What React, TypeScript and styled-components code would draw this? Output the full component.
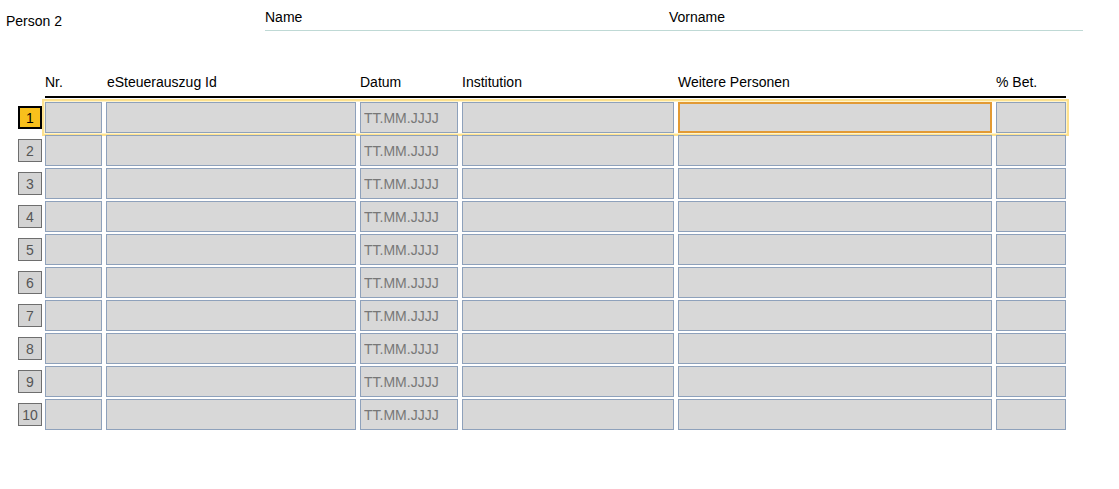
import styled, { createGlobalStyle } from "styled-components";

const GlobalStyle = createGlobalStyle`
  body {
    margin: 0;
    background: #ffffff;
    font-family: "Liberation Sans", Arial, sans-serif;
    color: #000000;
  }
`;

const COLUMNS = "57px 250px 98px 212px 314px 70px";

const Page = styled.div`
  width: 1119px;
  height: 489px;
  display: flex;
  flex-direction: column;
`;

const TopBar = styled.div`
  display: flex;
  align-items: flex-start;
  padding-top: 9px;
`;

const PersonLabel = styled.div`
  width: 259px;
  padding-left: 6px;
  margin-top: 4px;
  font-size: 14px;
  line-height: 16px;
`;

const NameBlock = styled.div`
  width: 818px;
  display: grid;
  grid-template-columns: 404px 1fr;
  padding-bottom: 5px;
  border-bottom: 1px solid #bfd9d5;
  font-size: 14px;
  line-height: 16px;
`;

const Table = styled.div`
  margin-top: 43px;
  padding-left: 18px;
  display: flex;
  flex-direction: column;
  gap: 2px;
`;

const HeaderRow = styled.div`
  display: flex;
  gap: 3px;
  margin-bottom: 2px;
`;

const Spacer = styled.div`
  width: 24px;
  flex: none;
`;

const HeaderFields = styled.div`
  display: grid;
  grid-template-columns: ${COLUMNS};
  column-gap: 4px;
  padding-bottom: 6px;
  border-bottom: 2px solid #000000;
  font-size: 14px;
  line-height: 16px;
`;

const HeaderCell = styled.div<{ $indent?: number }>`
  padding-left: ${(p) => p.$indent ?? 0}px;
  white-space: nowrap;
`;

const Row = styled.div`
  display: flex;
  align-items: center;
  gap: 3px;
`;

const NumBox = styled.div<{ $active?: boolean }>`
  width: 24px;
  height: 23px;
  flex: none;
  box-sizing: border-box;
  display: flex;
  align-items: center;
  justify-content: center;
  font-size: 14px;
  background: ${(p) => (p.$active ? "#f8c01c" : "#d3d3d3")};
  border: ${(p) => (p.$active ? "2px solid #000000" : "1px solid #6e6e6e")};
  color: ${(p) => (p.$active ? "#000000" : "#555555")};
`;

const Fields = styled.div<{ $active?: boolean }>`
  display: grid;
  grid-template-columns: ${COLUMNS};
  column-gap: 4px;
  box-shadow: ${(p) =>
    p.$active ? "0 0 0 1px #fff4cc, 0 0 0 3px #fde18e" : "none"};
`;

const Field = styled.input<{ $focused?: boolean }>`
  box-sizing: border-box;
  height: 31px;
  width: 100%;
  margin: 0;
  padding: 0 3px;
  background: #d8d8d8;
  border: ${(p) => (p.$focused ? "2px solid #e29a34" : "1px solid #8ea1bb")};
  border-radius: 0;
  font-family: "Liberation Sans", Arial, sans-serif;
  font-size: 14px;
  color: #333333;
  outline: none;

  &::placeholder {
    color: #777777;
    opacity: 1;
  }
`;

const headers = [
  { label: "Nr.", indent: 0 },
  { label: "eSteuerauszug Id", indent: 1 },
  { label: "Datum", indent: 0 },
  { label: "Institution", indent: 0 },
  { label: "Weitere Personen", indent: 0 },
  { label: "% Bet.", indent: 0 },
];

const rows = Array.from({ length: 10 }, (_, i) => i + 1);

export default function App() {
  return (
    <>
      <GlobalStyle />
      <Page>
        <TopBar>
          <PersonLabel>Person 2</PersonLabel>
          <NameBlock>
            <div>Name</div>
            <div>Vorname</div>
          </NameBlock>
        </TopBar>

        <Table>
          <HeaderRow>
            <Spacer />
            <HeaderFields>
              {headers.map((h) => (
                <HeaderCell key={h.label} $indent={h.indent}>
                  {h.label}
                </HeaderCell>
              ))}
            </HeaderFields>
          </HeaderRow>

          {rows.map((n) => {
            const active = n === 1;
            return (
              <Row key={n}>
                <NumBox $active={active}>{n}</NumBox>
                <Fields $active={active}>
                  <Field />
                  <Field />
                  <Field placeholder="TT.MM.JJJJ" />
                  <Field />
                  <Field $focused={active} />
                  <Field />
                </Fields>
              </Row>
            );
          })}
        </Table>
      </Page>
    </>
  );
}
